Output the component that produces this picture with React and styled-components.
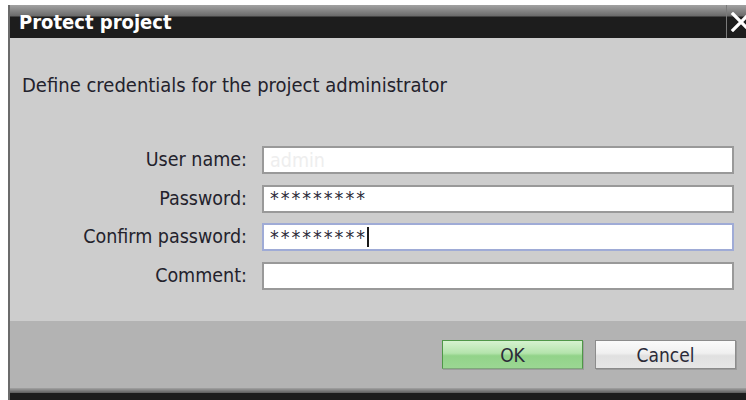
import React from 'react';
import styled, { createGlobalStyle } from 'styled-components';

const GlobalStyle = createGlobalStyle`
  html, body {
    margin: 0;
    padding: 0;
    background: #ffffff;
    overflow: hidden;
  }
  body {
    font-family: "DejaVu Sans Condensed", "DejaVu Sans", sans-serif;
    font-stretch: condensed;
  }
`;

const Window = styled.div`
  margin: 5px 0 0 8px;
  width: 738px;
  height: 400px;
  display: flex;
  flex-direction: column;
  border-left: 2px solid #6b6b6b;
  box-sizing: border-box;
  overflow: hidden;
`;

const TitleBar = styled.div`
  height: 33px;
  flex: none;
  display: flex;
  align-items: stretch;
  background: linear-gradient(to bottom, #a2a2a2 0, #6a6a6a 11px, #1d1d1d 12px, #1d1d1d 100%);
`;

const Title = styled.div`
  flex: 1;
  padding-left: 9px;
  color: #ffffff;
  font-weight: bold;
  font-size: 20px;
  line-height: 34px;
`;

const CloseButton = styled.div`
  width: 20px;
  flex: none;
  border-left: 1px solid #7a7a7a;
  overflow: hidden;
  display: flex;
  align-items: center;
  padding-left: 3px;
  box-sizing: border-box;

  svg {
    flex: none;
  }
`;

const Body = styled.div`
  height: 283px;
  flex: none;
  box-sizing: border-box;
  background: #cdcdcd;
  padding: 37px 12px 0 12px;
  color: #23222c;
`;

const Intro = styled.p`
  margin: 0 0 51px 0;
  font-size: 20px;
  line-height: 20px;
`;

const Form = styled.div`
  display: grid;
  grid-template-columns: 225px 472px;
  column-gap: 15px;
  row-gap: 10.5px;
  align-items: center;
`;

const Label = styled.label`
  text-align: right;
  font-size: 19.5px;
  line-height: 20px;
`;

const Field = styled.div`
  height: 28px;
  box-sizing: border-box;
  background: #ffffff;
  border: 2px solid ${p => (p.$active ? '#9fabd6' : '#999999')};
  padding: 0 6px;
  display: flex;
  align-items: center;
  font-size: 19.5px;
  color: ${p => (p.$ghost ? '#eeeeee' : '#2b2a38')};
  letter-spacing: ${p => (p.$secret ? '2px' : '0')};
`;

const Caret = styled.span`
  width: 2px;
  height: 20px;
  background: #1a1a1a;
  margin-left: 0;
`;

const Footer = styled.div`
  height: 67px;
  flex: none;
  background: #b3b3b3;
  display: flex;
  align-items: center;
  justify-content: flex-end;
  gap: 12px;
  padding-right: 10px;
  box-sizing: border-box;
`;

const Button = styled.button`
  width: 141px;
  height: 29px;
  box-sizing: border-box;
  font-family: inherit;
  font-stretch: condensed;
  font-size: 19px;
  color: #2b2a38;
  padding: 0;
  cursor: default;
  border: 1px solid ${p => (p.$primary ? '#4f9748' : '#8c8c8c')};
  border-bottom-color: ${p => (p.$primary ? '#7fa77b' : '#8a8a8a')};
  box-shadow: 1px 1px 0 #9c9c9c;
  background: ${p =>
    p.$primary
      ? 'linear-gradient(to bottom, #d6f2d0 0, #b4e4ac 45%, #92d389 55%, #9bd793 100%)'
      : 'linear-gradient(to bottom, #fbfbfb 0, #f0f0f0 45%, #e0e0e0 55%, #e6e6e6 100%)'};
`;

const FrameEdge = styled.div`
  height: 5px;
  flex: none;
  background: linear-gradient(to bottom, #a2a2a2, #5c5c5c);
`;

const Taskbar = styled.div`
  flex: 1;
  background: #1c1c1c;
`;

function CloseIcon() {
  return (
    <svg width="22" height="20" viewBox="0 0 22 20">
      <path d="M3 2 L19 18 M19 2 L3 18" stroke="#ffffff" strokeWidth="3.2" strokeLinecap="square" />
    </svg>
  );
}

export default function App() {
  return (
    <>
      <GlobalStyle />
      <Window>
        <TitleBar>
          <Title>Protect project</Title>
          <CloseButton>
            <CloseIcon />
          </CloseButton>
        </TitleBar>
        <Body>
          <Intro>Define credentials for the project administrator</Intro>
          <Form>
            <Label>User name:</Label>
            <Field $ghost>admin</Field>
            <Label>Password:</Label>
            <Field $secret>*********</Field>
            <Label>Confirm password:</Label>
            <Field $secret $active>
              *********
              <Caret />
            </Field>
            <Label>Comment:</Label>
            <Field />
          </Form>
        </Body>
        <Footer>
          <Button $primary>OK</Button>
          <Button>Cancel</Button>
        </Footer>
        <FrameEdge />
        <Taskbar />
      </Window>
    </>
  );
}
